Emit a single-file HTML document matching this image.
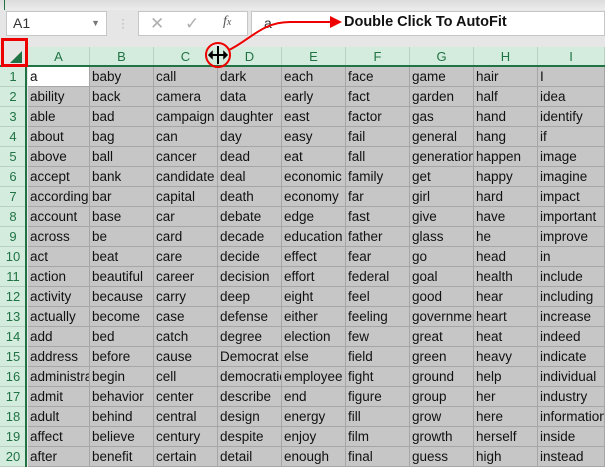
<!DOCTYPE html>
<html><head><meta charset="utf-8"><style>
*{margin:0;padding:0;box-sizing:border-box}
body{width:605px;height:467px;overflow:hidden;background:#e6e6e6;font-family:"Liberation Sans",sans-serif;position:relative}
.abs{position:absolute}
.cell{position:absolute;height:20px;background:#c6c6c6;border-right:1px solid #a6a6a6;border-bottom:1px solid #a6a6a6;font-size:13.5px;line-height:19px;padding-left:2px;overflow:hidden;white-space:nowrap;color:#111}
.ch{position:absolute;top:47px;height:19px;background:#d3ecdd;border-right:1px solid #b9cfc1;font-size:13px;color:#217346;text-align:center;line-height:19px}
.rh{position:absolute;left:0;width:26px;height:20px;background:#d3ecdd;border-bottom:1px solid #b9cfc1;font-size:13px;color:#217346;text-align:center;line-height:20px}
</style></head><body>
<div class="abs" style="left:0;top:0;width:605px;height:10px;background:linear-gradient(#dcdcdc,#ececec)"></div>
<div class="abs" style="left:4px;top:0;width:1px;height:10px;background:#217346"></div>
<div class="abs" style="left:6px;top:11px;width:101px;height:25px;background:#fff;border:1px solid #c6c6c6;font-size:14px;line-height:23px;padding-left:6px;color:#333">A1<span style="position:absolute;right:6px;top:0;font-size:9px;color:#777">▼</span></div>
<div class="abs" style="left:121px;top:17px;color:#aaa;font-size:12px;line-height:4px">·<br>·<br>·</div>
<div class="abs" style="left:138px;top:11px;width:110px;height:25px;background:#fff;border:1px solid #c6c6c6"></div>
<div class="abs" style="left:150px;top:14px;color:#b0b0b0;font-size:17px">✕</div>
<div class="abs" style="left:185px;top:14px;color:#b0b0b0;font-size:17px">✓</div>
<div class="abs" style="left:223px;top:14px;color:#555;font-size:14px;font-style:italic;font-family:'Liberation Serif',serif">f<span style="font-size:10px">x</span></div>
<div class="abs" style="left:251px;top:11px;width:354px;height:25px;background:#fff;border:1px solid #c6c6c6;font-size:14px;line-height:23px;padding-left:12px;color:#333">a</div>
<div class="abs" style="left:344px;top:14px;font-size:14.5px;font-weight:bold;color:#111">Double Click To AutoFit</div>
<div class="abs" style="left:0;top:37px;width:605px;height:10px;background:#e6e6e6"></div>
<div class="abs" style="left:0;top:47px;width:27px;height:19px;background:#e6e6e6"></div>
<div id="g"></div>
<div class="abs" style="left:0;top:65px;width:605px;height:2px;background:#217346"></div>
<div class="abs" style="left:25px;top:66px;width:2px;height:401px;background:#217346"></div>
<div class="abs" style="left:1px;top:38px;width:27px;height:29px;border:3px solid #e00"></div>
<div class="abs" style="left:10px;top:51px;width:0;height:0;border-left:12px solid transparent;border-bottom:12px solid #217346"></div>
<svg class="abs" style="left:0;top:0" width="605" height="467">
<path d="M229 50 C250 40,262 22,290 22 L332 22" stroke="#e00" stroke-width="2" fill="none"/>
<polygon points="330,16 342,22 330,28" fill="#e00"/>
<circle cx="218" cy="55" r="12" fill="none" stroke="#e00" stroke-width="2"/>
<path d="M218 46V64M209 55H227" stroke="#000" stroke-width="2"/>
<path d="M209 55l3-3v6zM227 55l-3-3v6z" stroke="#000" stroke-width="1.5"/>
</svg>
<script>
var cols=[28,90,154,218,282,346,410,474,538,605],L="ABCDEFGHI";
var d=[["a","baby","call","dark","each","face","game","hair","I"],
["ability","back","camera","data","early","fact","garden","half","idea"],
["able","bad","campaign","daughter","east","factor","gas","hand","identify"],
["about","bag","can","day","easy","fail","general","hang","if"],
["above","ball","cancer","dead","eat","fall","generation","happen","image"],
["accept","bank","candidate","deal","economic","family","get","happy","imagine"],
["according","bar","capital","death","economy","far","girl","hard","impact"],
["account","base","car","debate","edge","fast","give","have","important"],
["across","be","card","decade","education","father","glass","he","improve"],
["act","beat","care","decide","effect","fear","go","head","in"],
["action","beautiful","career","decision","effort","federal","goal","health","include"],
["activity","because","carry","deep","eight","feel","good","hear","including"],
["actually","become","case","defense","either","feeling","government","heart","increase"],
["add","bed","catch","degree","election","few","great","heat","indeed"],
["address","before","cause","Democrat","else","field","green","heavy","indicate"],
["administration","begin","cell","democratic","employee","fight","ground","help","individual"],
["admit","behavior","center","describe","end","figure","group","her","industry"],
["adult","behind","central","design","energy","fill","grow","here","information"],
["affect","believe","century","despite","enjoy","film","growth","herself","inside"],
["after","benefit","certain","detail","enough","final","guess","high","instead"]];
var h="";
for(var c=0;c<9;c++)h+='<div class="ch" style="left:'+cols[c]+'px;width:'+(cols[c+1]-cols[c])+'px">'+L[c]+'</div>';
for(var r=0;r<20;r++){var t=67+20*r;
h+='<div class="rh" style="top:'+t+'px">'+(r+1)+'</div>';
for(c=0;c<9;c++)h+='<div class="cell" style="top:'+t+'px;left:'+cols[c]+'px;width:'+(cols[c+1]-cols[c])+'px'+(r==0&&c==0?';background:#fff':'')+'">'+d[r][c]+'</div>';}
document.getElementById("g").innerHTML=h;
</script>
</body></html>
